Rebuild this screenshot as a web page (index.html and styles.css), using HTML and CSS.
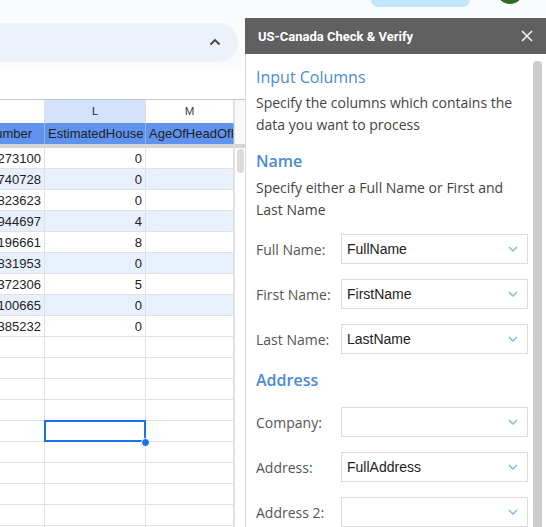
FILE: index.html
```html
<!DOCTYPE html>
<html>
<head>
<meta charset="utf-8">
<link rel="stylesheet" href="styles.css">
</head>
<body>
<div class="app">
  <div class="topstrip">
    <div class="pill"></div>
    <div class="avatar"></div>
  </div>
  <div class="main">
    <div class="sheet">
      <div class="toolbar">
        <div class="menu-pill">
          <svg class="caret" width="12" height="8" viewBox="0 0 12 8"><path d="M1.5 6.5 L6 2 L10.5 6.5" fill="none" stroke="#444746" stroke-width="1.8"/></svg>
        </div>
      </div>
      <div class="formula"></div>
      <div class="grid">
        <div class="table">
          <div class="row colhead">
            <div class="cell k"></div>
            <div class="cell l sel">L</div>
            <div class="cell m">M</div>
          </div>
          <div class="row headrow">
            <div class="cell k clip"><span>PhoneNumber</span></div>
            <div class="cell l left">EstimatedHouse</div>
            <div class="cell m left">AgeOfHeadOfHousehold</div>
          </div>
          <div class="freeze"></div>
          <div class="row data"><div class="cell k num">4105273100</div><div class="cell l num">0</div><div class="cell m"></div></div>
          <div class="row data alt"><div class="cell k num">4105740728</div><div class="cell l num">0</div><div class="cell m"></div></div>
          <div class="row data"><div class="cell k num">4105823623</div><div class="cell l num">0</div><div class="cell m"></div></div>
          <div class="row data alt"><div class="cell k num">4105944697</div><div class="cell l num">4</div><div class="cell m"></div></div>
          <div class="row data"><div class="cell k num">4105196661</div><div class="cell l num">8</div><div class="cell m"></div></div>
          <div class="row data alt"><div class="cell k num">4105831953</div><div class="cell l num">0</div><div class="cell m"></div></div>
          <div class="row data"><div class="cell k num">4105372306</div><div class="cell l num">5</div><div class="cell m"></div></div>
          <div class="row data alt"><div class="cell k num">4105100665</div><div class="cell l num">0</div><div class="cell m"></div></div>
          <div class="row data"><div class="cell k num">4105385232</div><div class="cell l num">0</div><div class="cell m"></div></div>
          <div class="row data"><div class="cell k"></div><div class="cell l"></div><div class="cell m"></div></div>
          <div class="row data"><div class="cell k"></div><div class="cell l"></div><div class="cell m"></div></div>
          <div class="row data"><div class="cell k"></div><div class="cell l"></div><div class="cell m"></div></div>
          <div class="row data"><div class="cell k"></div><div class="cell l"></div><div class="cell m"></div></div>
          <div class="row data"><div class="cell k"></div><div class="cell l active"><div class="selbox"></div><div class="handle"></div></div><div class="cell m"></div></div>
          <div class="row data"><div class="cell k"></div><div class="cell l"></div><div class="cell m"></div></div>
          <div class="row data"><div class="cell k"></div><div class="cell l"></div><div class="cell m"></div></div>
          <div class="row data"><div class="cell k"></div><div class="cell l"></div><div class="cell m"></div></div>
          <div class="row data"><div class="cell k"></div><div class="cell l"></div><div class="cell m"></div></div>
          <div class="row data"><div class="cell k"></div><div class="cell l"></div><div class="cell m"></div></div>
        </div>
        <div class="vscroll">
          <div class="vscroll-head"></div>
          <div class="vthumb"></div>
        </div>
      </div>
    </div>
    <aside class="sidebar">
      <div class="sb-header">
        <span class="sb-title">US-Canada Check &amp; Verify</span>
        <svg class="sb-close" width="12" height="12" viewBox="0 0 12 12"><path d="M1 1 L11 11 M11 1 L1 11" stroke="#f2f2f2" stroke-width="1.6" fill="none"/></svg>
      </div>
      <div class="sb-body">
        <div class="sb-content">
          <h2 class="sb-h first">Input Columns</h2>
          <p class="sb-desc">Specify the columns which contains the data you want to process</p>
          <h2 class="sb-h bold">Name</h2>
          <p class="sb-desc">Specify either a Full Name or First and Last Name</p>
          <div class="field first-field">
            <label class="flabel">Full Name:</label>
            <div class="select"><span class="sval">FullName</span><svg class="chev" width="10" height="6" viewBox="0 0 10 6"><path d="M1 1 L5 5 L9 1" fill="none" stroke="#86bfeb" stroke-width="1.6"/></svg></div>
          </div>
          <div class="field">
            <label class="flabel">First Name:</label>
            <div class="select"><span class="sval">FirstName</span><svg class="chev" width="10" height="6" viewBox="0 0 10 6"><path d="M1 1 L5 5 L9 1" fill="none" stroke="#86bfeb" stroke-width="1.6"/></svg></div>
          </div>
          <div class="field">
            <label class="flabel">Last Name:</label>
            <div class="select"><span class="sval">LastName</span><svg class="chev" width="10" height="6" viewBox="0 0 10 6"><path d="M1 1 L5 5 L9 1" fill="none" stroke="#86bfeb" stroke-width="1.6"/></svg></div>
          </div>
          <h2 class="sb-h bold addr">Address</h2>
          <div class="field addr-first">
            <label class="flabel">Company:</label>
            <div class="select"><span class="sval"></span><svg class="chev" width="10" height="6" viewBox="0 0 10 6"><path d="M1 1 L5 5 L9 1" fill="none" stroke="#86bfeb" stroke-width="1.6"/></svg></div>
          </div>
          <div class="field">
            <label class="flabel">Address:</label>
            <div class="select"><span class="sval">FullAddress</span><svg class="chev" width="10" height="6" viewBox="0 0 10 6"><path d="M1 1 L5 5 L9 1" fill="none" stroke="#86bfeb" stroke-width="1.6"/></svg></div>
          </div>
          <div class="field">
            <label class="flabel">Address 2:</label>
            <div class="select"><span class="sval"></span><svg class="chev" width="10" height="6" viewBox="0 0 10 6"><path d="M1 1 L5 5 L9 1" fill="none" stroke="#86bfeb" stroke-width="1.6"/></svg></div>
          </div>
        </div>
        <div class="sb-scroll"></div>
      </div>
    </aside>
  </div>
</div>
</body>
</html>
```

FILE: styles.css
```css
* { box-sizing: border-box; }
html, body { margin: 0; padding: 0; }
body {
  width: 546px;
  height: 527px;
  overflow: hidden;
  background: #f9fbfd;
  font-family: "Liberation Sans", Arial, sans-serif;
}
.app { display: flex; flex-direction: column; height: 527px; }

.topstrip {
  height: 18px;
  display: flex;
  align-items: flex-start;
  background: #f9fbfd;
  flex: none;
}
.pill {
  margin-left: 371px;
  width: 99px;
  height: 7px;
  background: #c2e7ff;
  border-radius: 0 0 16px 16px;
}
.avatar {
  margin-left: 27px;
  margin-top: -22px;
  width: 26px;
  height: 26px;
  border-radius: 50%;
  background: #2f6b21;
}

.main { display: flex; flex: 1; min-height: 0; }

.sheet {
  width: 245px;
  flex: none;
  display: flex;
  flex-direction: column;
  overflow: hidden;
}
.toolbar {
  height: 53px;
  padding-top: 5px;
  background: #f9fbfd;
  flex: none;
}
.menu-pill {
  margin-left: -40px;
  width: 278px;
  height: 39px;
  background: #edf2fa;
  border-radius: 20px;
  display: flex;
  align-items: center;
  justify-content: flex-end;
  padding-right: 17px;
}
.caret { display: block; margin-bottom: 2px; }
.formula { height: 28px; background: #fff; flex: none; }

.grid {
  flex: 1;
  display: flex;
  background: #fff;
  border-top: 1px solid #c7c7c7;
  overflow: hidden;
}
.table { width: 234px; flex: none; }
.row { display: flex; }
.cell {
  flex: none;
  border-right: 1px solid #e1e1e1;
  font-size: 13px;
  color: #222;
  white-space: nowrap;
  overflow: hidden;
  display: flex;
  align-items: center;
}
.cell.k { width: 45px; }
.cell.l { width: 101px; }
.cell.m { width: 88px; }

.colhead { height: 23px; background: #fff; }
.colhead .cell {
  justify-content: center;
  font-family: Roboto, "Liberation Sans", sans-serif;
  font-size: 11px;
  color: #444746;
  border-right-color: #e1e1e1;
}
.colhead .cell.sel { background: #d3e3fd; color: #1f1f1f; }

.headrow { height: 21px; background: #5f93ee; }
.headrow .cell { border-right-color: #8fb3f2; color: #1f1f1f; padding-left: 3px; }
.headrow .cell.clip { justify-content: flex-end; padding-right: 12px; padding-left: 0; }
.headrow .cell.clip span { flex: none; }

.freeze { height: 4px; background: #d5d5d5; width: 245px; }

.data { height: 21px; border-bottom: 1px solid #e1e1e1; background: #fff; }
.data.alt { background: #e8f0fe; }
.data .cell.num { justify-content: flex-end; padding-right: 3px; }
.data .cell.k.num span { flex: none; }
.cell.active { position: relative; overflow: visible; }
.selbox {
  position: absolute;
  left: -1px;
  top: -1px;
  width: 102px;
  height: 22px;
  border: 2px solid #1a73e8;
}
.handle {
  position: absolute;
  right: -5px;
  bottom: -6px;
  width: 9px;
  height: 9px;
  border-radius: 50%;
  background: #1a73e8;
  border: 1px solid #fff;
}

.vscroll {
  width: 11px;
  flex: none;
  border-left: 1px solid #e1e1e1;
  background: #fff;
}
.vscroll-head { height: 44px; background: #f8f9fa; border-bottom: 4px solid #d5d5d5; height: 48px; }
.vthumb {
  margin: 1px 0 0 2px;
  width: 7px;
  height: 24px;
  border-radius: 4px;
  background: #dadce0;
}

.sidebar {
  width: 301px;
  flex: none;
  margin-top: 0;
  display: flex;
  flex-direction: column;
  background: #fff;
}
.sb-header {
  height: 36px;
  background: #606060;
  display: flex;
  align-items: center;
  justify-content: space-between;
  padding: 0 13px 0 13px;
  flex: none;
}
.sb-title {
  font-family: Roboto, "Liberation Sans", sans-serif;
  font-weight: 700;
  font-size: 13px;
  color: #fff;
}
.sb-close { display: block; margin-right: 0; }

.sb-body {
  flex: 1;
  display: flex;
  border-left: 1px solid #d9d9d9;
  overflow: hidden;
}
.sb-content {
  flex: 1;
  padding: 12px 5px 0 10px;
  font-family: "Open Sans", sans-serif;
}
.sb-scroll {
  width: 9px;
  margin: 7px 4px 0 0;
  background: #cdcdcd;
  border-radius: 4px 4px 0 0;
  flex: none;
}
.sb-h {
  margin: 15px 0 0 0;
  font-size: 16px;
  line-height: 22px;
  font-weight: 400;
  color: #4c8bd1;
}
.sb-h.first { margin-top: 0; }
.sb-h.bold { font-weight: 600; }
.sb-h.addr { margin-top: 15px; }
.sb-desc {
  margin: 4px 0 0 0;
  font-size: 14px;
  line-height: 21.5px;
  color: #444;
}
.sb-h.bold + .sb-desc { margin-top: 5px; }

.field {
  display: flex;
  align-items: center;
  margin-top: 15px;
  height: 30px;
}
.field.first-field { margin-top: 14px; }
.field.addr-first { margin-top: 16px; }
.flabel {
  width: 85px;
  flex: none;
  font-size: 14px;
  color: #555;
}
.select {
  flex: 1;
  height: 30px;
  border: 1px solid #dcdcdc;
  display: flex;
  align-items: center;
  justify-content: space-between;
  padding: 0 9px 0 5px;
  background: #fff;
}
.sval {
  font-family: "Liberation Sans", Arial, sans-serif;
  font-size: 14px;
  color: #222;
}
.chev { display: block; }
```
